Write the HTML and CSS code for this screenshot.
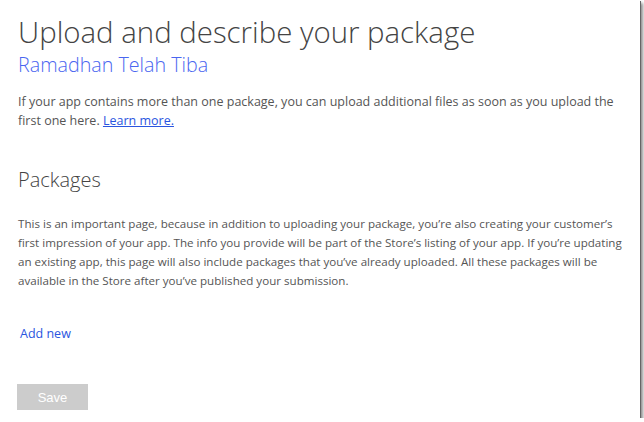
FILE: index.html
```html
<!DOCTYPE html>
<html lang="en">
<head>
    <meta charset="UTF-8">
    <meta name="viewport" content="width=device-width, initial-scale=1.0">
    <link rel="stylesheet" href="styles.css">
</head>
<body>

<div class="frame">
    <h1>Upload and describe your package</h1>
    <h2 class="app-name">Ramadhan Telah Tiba</h2>
    <p class="intro">If your app contains more than one package, you can upload additional files as soon as you upload the first one here. <a href="#">Learn more.</a></p>

    <div class="section">
        <h3>Packages</h3>
        <p>This is an important page, because in addition to uploading your package, you’re also creating your customer’s<br>
        first impression of your app. The info you provide will be part of the Store’s listing of your app. If you’re updating<br>
        an existing app, this page will also include packages that you’ve already uploaded. All these packages will be<br>
        available in the Store after you’ve published your submission.</p>
        <a class="add-new" href="#">Add new</a>
    </div>

    <button class="save" disabled>Save</button>
</div>

</body>
</html>
```

FILE: styles.css
```css
body {
    margin: 0;
    padding: 0;
    background: #fff;
    font-family: "Open Sans", "Noto Sans", sans-serif;
    color: #555;
}

.frame {
    width: 640px;
    height: 418px;
    box-sizing: border-box;
    padding: 14px 0 0 18px;
    background: #fff;
    box-shadow: 1px 1px 0 #666, 3px 3px 3px rgba(0, 0, 0, 0.45);
    overflow: hidden;
}

h1 {
    margin: 0;
    font-size: 29.4px;
    font-weight: 300;
    color: #444;
    line-height: 36px;
}

.app-name {
    margin: 2px 0 0 0;
    font-size: 19.7px;
    font-weight: 300;
    color: #4a66f0;
    line-height: 26px;
}

.intro {
    margin: 14px 0 0 0;
    font-size: 12.5px;
    line-height: 19px;
    width: 610px;
}

.intro a {
    color: #2a55e0;
}

.section {
    margin-top: 36px;
}

.section h3 {
    margin: 0;
    font-size: 20px;
    font-weight: 300;
    color: #444;
    line-height: 28px;
}

.section p {
    margin: 20px 0 0 0;
    font-size: 11.6px;
    line-height: 19px;
    white-space: nowrap;
}

.add-new {
    display: inline-block;
    margin: 35px 0 0 2px;
    font-size: 12.5px;
    color: #2a55e0;
    text-decoration: none;
}

.save {
    display: block;
    margin-top: 41px;
    margin-left: -1px;
    width: 71px;
    height: 26px;
    border: none;
    background: #cccccc;
    color: #fff;
    font-family: "Liberation Sans", Arial, sans-serif;
    font-size: 13px;
}
```
